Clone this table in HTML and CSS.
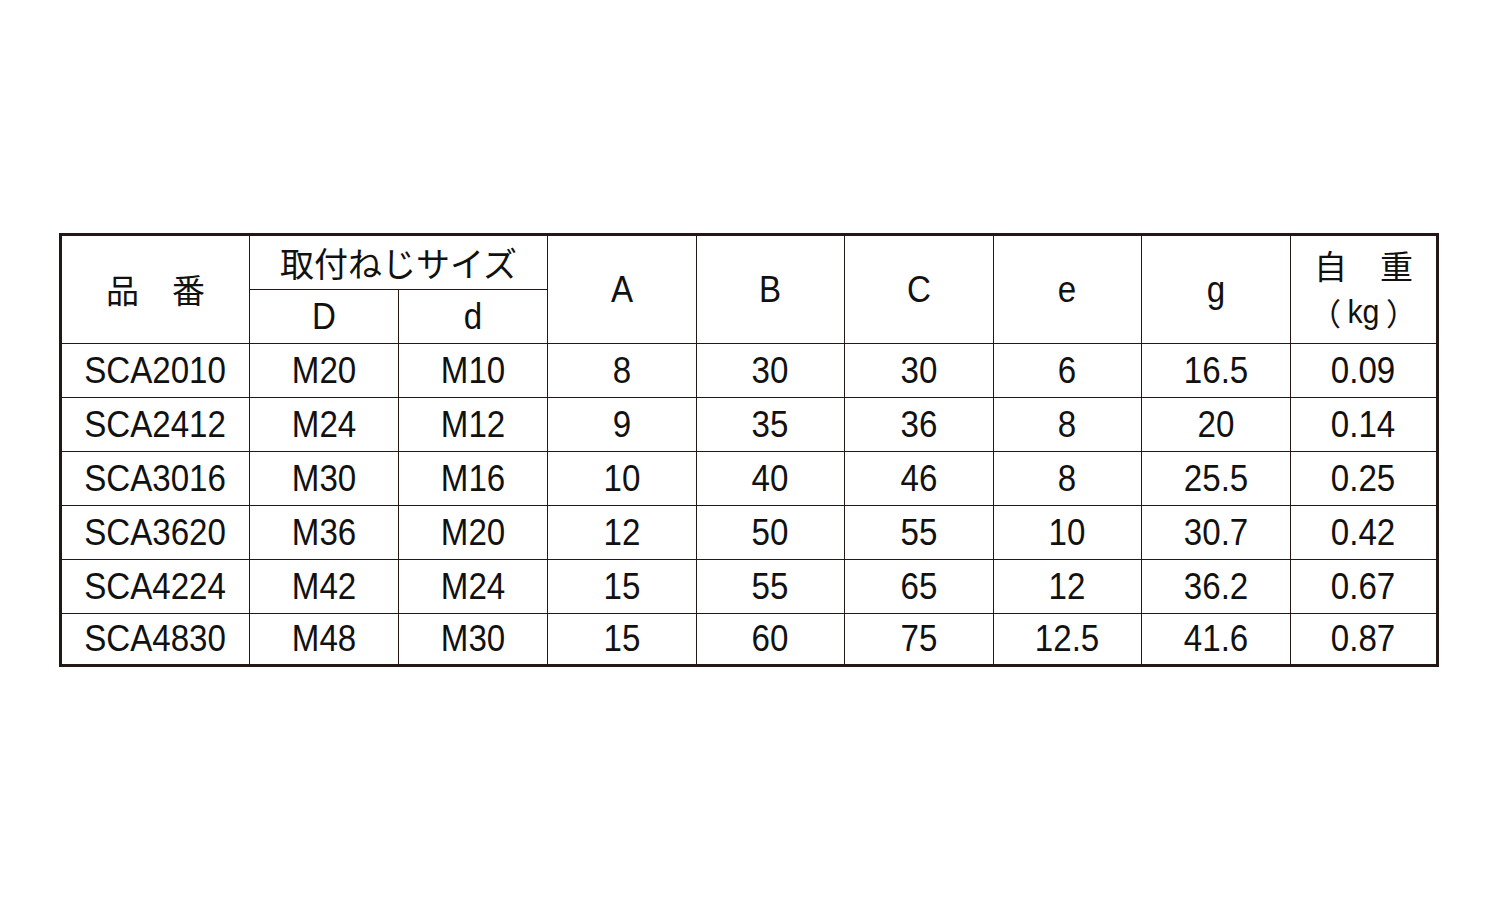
FILE: index.html
```html
<!DOCTYPE html>
<html lang="ja">
<head>
<meta charset="utf-8">
<title>SCA</title>
<link rel="stylesheet" href="styles.css">
</head>
<body>
<div class="page">
  <div class="spec">
    <div class="cell hd jp r2 c1">品　番</div>
    <div class="cell hd jp wide">取付ねじサイズ</div>
    <div class="cell hd r2"><span class="t">A</span></div>
    <div class="cell hd r2"><span class="t">B</span></div>
    <div class="cell hd r2"><span class="t">C</span></div>
    <div class="cell hd r2"><span class="t">e</span></div>
    <div class="cell hd r2"><span class="t">g</span></div>
    <div class="cell hd r2 weight"><span class="jp">自　重</span><span class="kg"><span class="paren open">（</span><span class="t">kg</span><span class="paren close">）</span></span></div>
    <div class="cell hd"><span class="t">D</span></div>
    <div class="cell hd"><span class="t">d</span></div>

    <div class="cell"><span class="t">SCA2010</span></div><div class="cell"><span class="t">M20</span></div><div class="cell"><span class="t">M10</span></div><div class="cell"><span class="t">8</span></div><div class="cell"><span class="t">30</span></div><div class="cell"><span class="t">30</span></div><div class="cell"><span class="t">6</span></div><div class="cell"><span class="t">16.5</span></div><div class="cell"><span class="t">0.09</span></div>
    <div class="cell"><span class="t">SCA2412</span></div><div class="cell"><span class="t">M24</span></div><div class="cell"><span class="t">M12</span></div><div class="cell"><span class="t">9</span></div><div class="cell"><span class="t">35</span></div><div class="cell"><span class="t">36</span></div><div class="cell"><span class="t">8</span></div><div class="cell"><span class="t">20</span></div><div class="cell"><span class="t">0.14</span></div>
    <div class="cell"><span class="t">SCA3016</span></div><div class="cell"><span class="t">M30</span></div><div class="cell"><span class="t">M16</span></div><div class="cell"><span class="t">10</span></div><div class="cell"><span class="t">40</span></div><div class="cell"><span class="t">46</span></div><div class="cell"><span class="t">8</span></div><div class="cell"><span class="t">25.5</span></div><div class="cell"><span class="t">0.25</span></div>
    <div class="cell"><span class="t">SCA3620</span></div><div class="cell"><span class="t">M36</span></div><div class="cell"><span class="t">M20</span></div><div class="cell"><span class="t">12</span></div><div class="cell"><span class="t">50</span></div><div class="cell"><span class="t">55</span></div><div class="cell"><span class="t">10</span></div><div class="cell"><span class="t">30.7</span></div><div class="cell"><span class="t">0.42</span></div>
    <div class="cell"><span class="t">SCA4224</span></div><div class="cell"><span class="t">M42</span></div><div class="cell"><span class="t">M24</span></div><div class="cell"><span class="t">15</span></div><div class="cell"><span class="t">55</span></div><div class="cell"><span class="t">65</span></div><div class="cell"><span class="t">12</span></div><div class="cell"><span class="t">36.2</span></div><div class="cell"><span class="t">0.67</span></div>
    <div class="cell"><span class="t">SCA4830</span></div><div class="cell"><span class="t">M48</span></div><div class="cell"><span class="t">M30</span></div><div class="cell"><span class="t">15</span></div><div class="cell"><span class="t">60</span></div><div class="cell"><span class="t">75</span></div><div class="cell"><span class="t">12.5</span></div><div class="cell"><span class="t">41.6</span></div><div class="cell"><span class="t">0.87</span></div>
  </div>
</div>
</body>
</html>
```

FILE: styles.css
```css
html, body {
  margin: 0;
  padding: 0;
  background: #ffffff;
}

.page {
  width: 1500px;
  height: 900px;
  padding: 233px 0 0 59px;
  box-sizing: border-box;
}

.spec {
  display: grid;
  grid-template-columns: 187px 148px 148px 148px 147px 148px 147px 148px 145px;
  grid-template-rows: 53px 53px 53px 53px 53px 53px 53px 50px;
  gap: 1px;
  width: 1380px;
  box-sizing: border-box;
  border: 3px solid #231815;
  background: #231815;
}

.cell {
  background: #ffffff;
  display: flex;
  align-items: center;
  justify-content: center;
  font-family: "Liberation Sans", Arial, sans-serif;
  font-size: 36px;
  color: #111111;
  line-height: 1;
}

.t {
  display: inline-block;
  transform: scaleX(0.92);
  transform-origin: center;
}

.jp {
  font-family: "Noto Sans CJK JP", "Liberation Sans", sans-serif;
  font-size: 33px;
  font-weight: 400;
}

.r2 {
  grid-row: span 2;
}

.wide {
  grid-column: span 2;
  font-size: 34px;
  padding-top: 1px;
}

.weight {
  flex-direction: column;
  gap: 13px;
  padding-bottom: 3px;
}

.weight .jp {
  display: block;
  line-height: 1;
}

.kg {
  display: flex;
  align-items: center;
  font-size: 33px;
  line-height: 1;
}

.paren {
  display: inline-block;
  font-family: "Noto Sans CJK JP", sans-serif;
  font-size: 31px;
}

.open {
  margin-right: 5px;
}

.close {
  margin-left: 5px;
}
```
